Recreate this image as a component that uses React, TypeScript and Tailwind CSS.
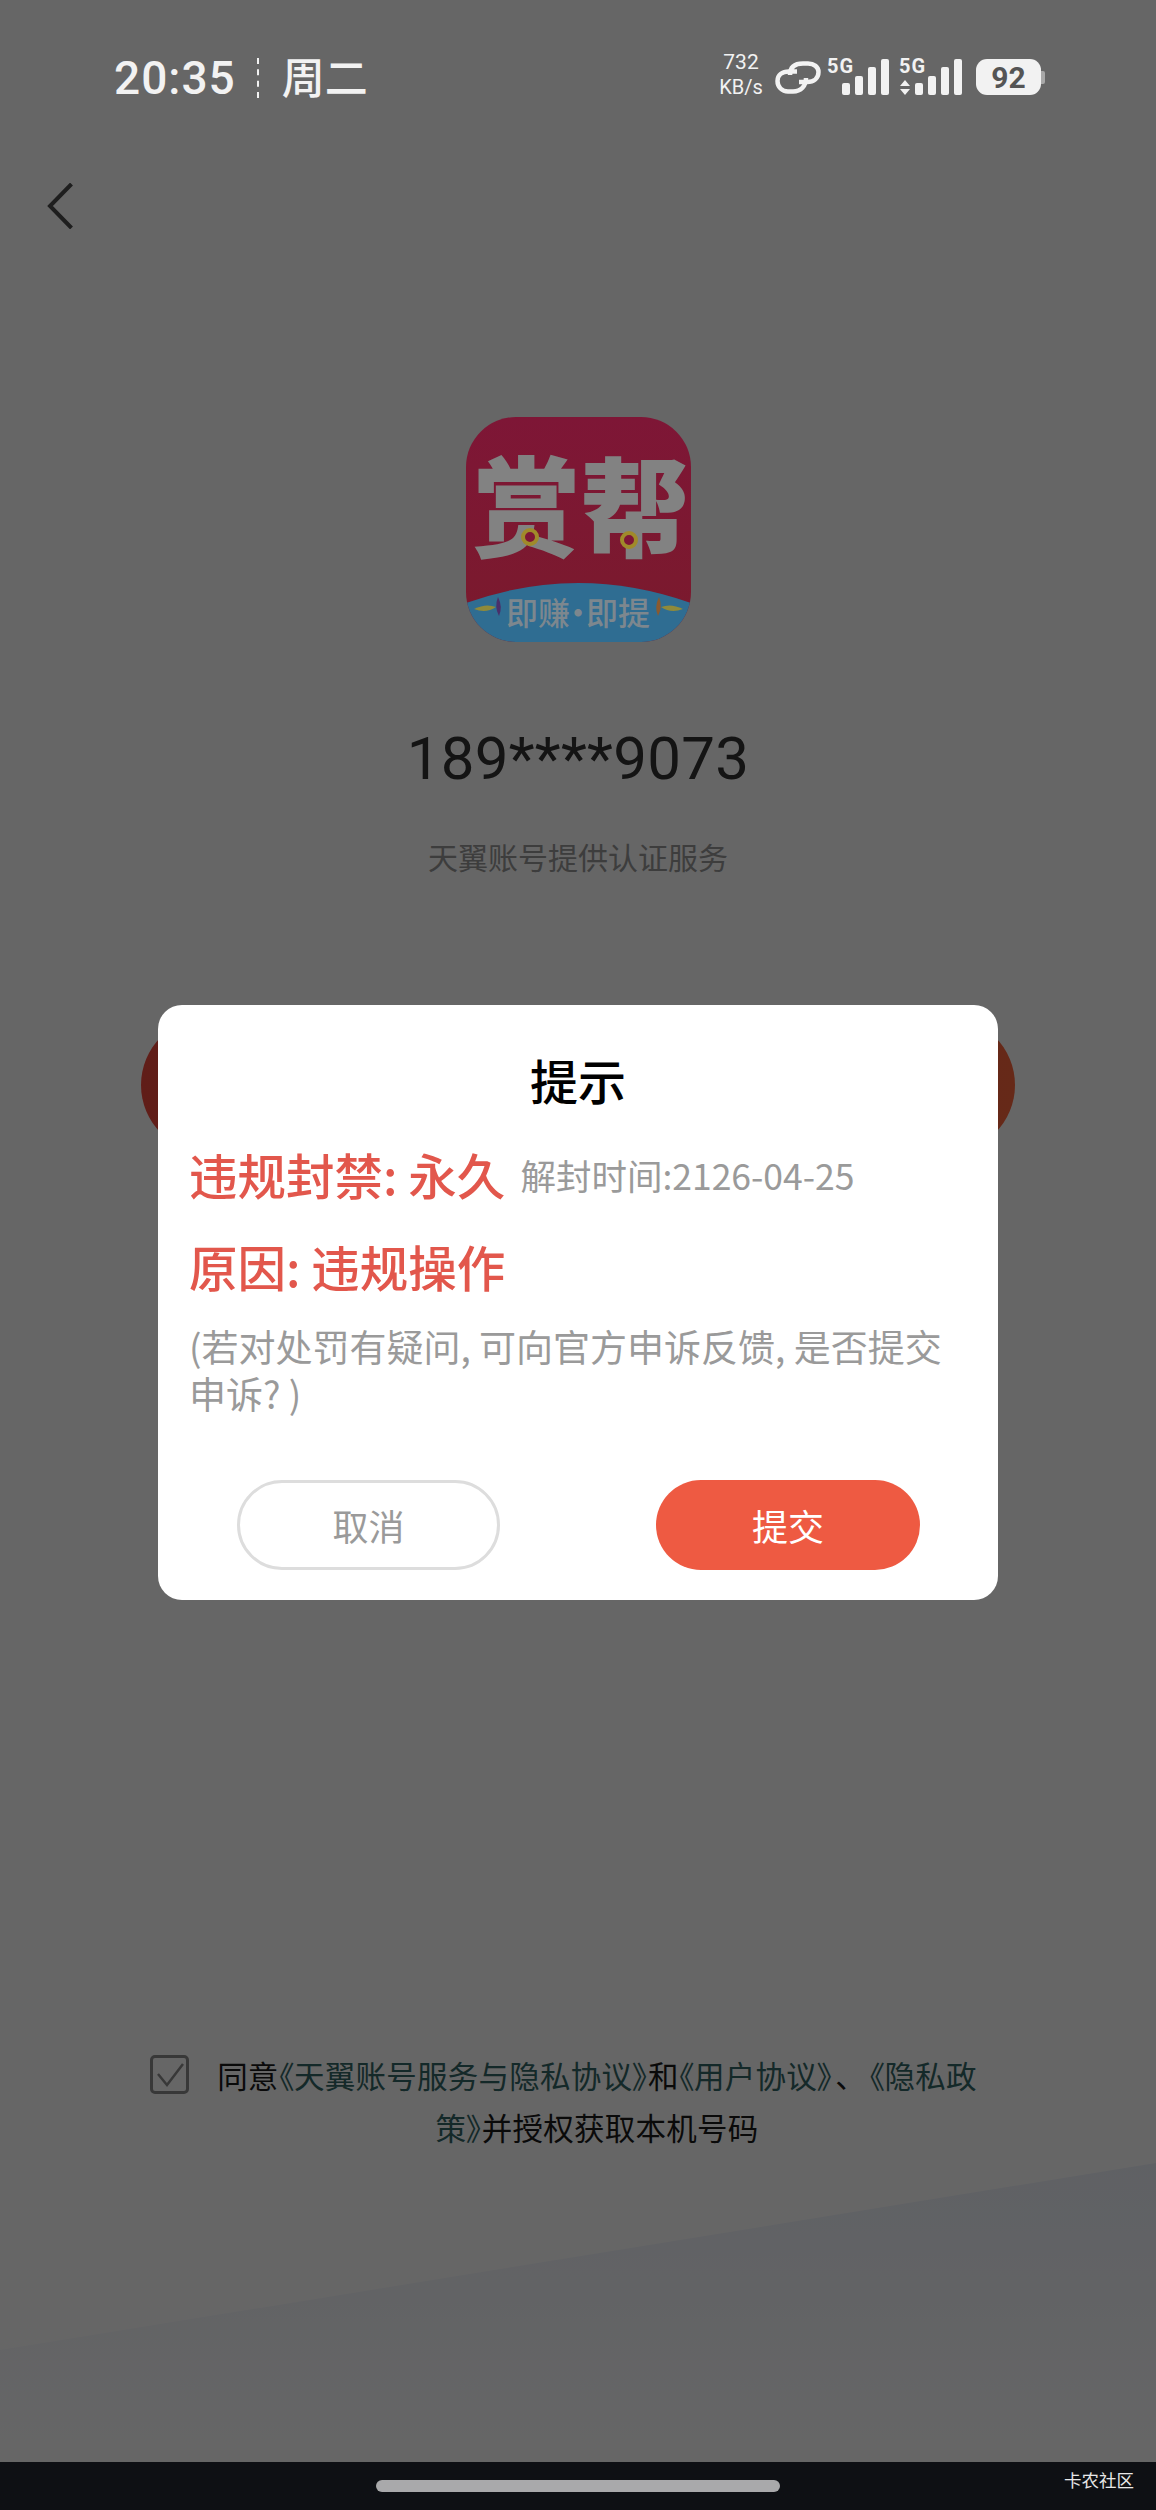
const cjk = { fontFamily: '"Noto Sans CJK SC", sans-serif' };
const roboto = { fontFamily: 'Roboto, sans-serif' };

function Signal({ arrows }: { arrows?: boolean }) {
  const bars = ['h-[12px]', 'h-[19px]', 'h-[28px]', 'h-[36px]'];
  return (
    <div className="relative flex items-end h-[38px] gap-[5px]">
      <span className={`absolute top-[-1px] text-[20px] tracking-[1px] font-bold leading-none text-[#f2f2f2] ${arrows ? 'left-[-16px]' : 'left-[-15px]'}`}>
        5G
      </span>
      {arrows && (
        <svg width="10" height="15" viewBox="0 0 10 15" className="absolute left-[-15px] bottom-0">
          <path d="M5 0L10 6H0Z M5 15L0 9H10Z" fill="#f2f2f2" />
        </svg>
      )}
      {bars.map((h) => (
        <div key={h} className={`w-[8px] rounded-[2px] bg-[#f2f2f2] ${h}`} />
      ))}
    </div>
  );
}

function StatusBar() {
  return (
    <div className="relative z-20 h-[98px] pt-[48px] pl-[114px] pr-[111px] flex items-start justify-between text-[#f2f2f2]" style={roboto}>
      <div className="flex items-center h-[60px]">
        <span className="text-[46px] font-medium tracking-[1px] leading-none">20:35</span>
        <div className="ml-[21px] h-[40px] border-l-2 border-dashed border-[#f2f2f2]" />
        <span className="ml-[23px] mt-[-5px] text-[43px] font-medium leading-none" style={cjk}>周二</span>
      </div>
      <div className="flex items-end h-[48px]">
        <div className="w-[50px] mb-[-4px] text-center text-[21px] leading-[25px]">
          <div>732</div>
          <div className="text-[20px]">KB/s</div>
        </div>
        <svg width="46" height="33" viewBox="0 0 46 33" className="ml-[9px] mb-[2px]" fill="none" stroke="#f2f2f2" strokeWidth="4.5">
          <path d="M15 14C15 6 20 2.5 28 2.5H33C39 2.5 43.5 6 43.5 11C43.5 17 39 21 32 21H24" />
          <path d="M31 17C31 25 26 30.5 18 30.5H13C7 30.5 2.5 26 2.5 20C2.5 14 7 10.5 14 10.5H22" />
        </svg>
        <div className="ml-[21px] mb-[1px]"><Signal /></div>
        <div className="ml-[26px] mb-[1px]"><Signal arrows /></div>
        <div className="ml-[14px] mb-[1px] flex items-center">
          <div className="w-[65px] h-[36px] rounded-[11px] bg-[#f2f2f2] flex items-center justify-center text-[30px] font-bold text-[#555555]">92</div>
          <div className="w-[4px] h-[13px] rounded-r-[2px] bg-[#a8a8a8]" />
        </div>
      </div>
    </div>
  );
}

function AppLogo() {
  return (
    <div className="relative z-[5] w-[225px] h-[225px] rounded-[50px] overflow-hidden bg-gradient-to-b from-[#7e1636] to-[#7a1a2c]" style={cjk}>
      <div className="absolute left-[7px] top-[25px] flex text-[108px] font-black leading-[120px] text-[#828282]">
        <span>赏</span><span>帮</span>
      </div>
      <svg width="225" height="225" viewBox="0 0 225 225" className="absolute inset-0">
        <path d="M0 186Q112 146 225 186V225H0Z" fill="#2f6d92" />
        {/* coins */}
        <circle cx="64" cy="120" r="7" fill="#7e1636" stroke="#a08a2a" strokeWidth="4" />
        <circle cx="163" cy="123" r="7" fill="#7e1636" stroke="#a08a2a" strokeWidth="4" />
        {/* leaves on the banner */}
        <path d="M8 192Q20 186 30 190Q20 197 8 192Z" fill="#8f8a3a" />
        <path d="M217 192Q205 186 195 190Q205 197 217 192Z" fill="#8f8a3a" />
        <path d="M32 180Q37 190 33 199Q28 190 32 180Z" fill="#4a2f6a" />
        <path d="M193 180Q188 190 192 199Q197 190 193 180Z" fill="#8a5a30" />
      </svg>
      <div className="absolute left-0 right-0 top-[172px] text-center text-[32px] leading-[44px] font-medium text-[#7d878e] whitespace-nowrap [font-feature-settings:'palt']">即赚·即提</div>
    </div>
  );
}

function AlertDialog() {
  return (
    <div className="absolute z-10 left-[158px] top-[1005px] w-[840px] h-[595px] rounded-[24px] bg-white pl-[31px] pr-[31px] pt-[44px]" style={cjk}>
      <h2 className="text-center text-[48px] leading-[60px] font-medium text-black">提示</h2>
      <div className="mt-[33px] flex items-center h-[64px]">
        <span className="text-[48.5px] font-medium leading-none whitespace-nowrap text-[#e2574c]">违规封禁: 永久</span>
        <span className="ml-[15px] mt-[2px] text-[35.5px] leading-none text-[#9a9a9a] whitespace-nowrap">解封时间:2126-04-25</span>
      </div>
      <div className="mt-[28px] text-[48.5px] font-medium leading-[64px] text-[#e2574c]">原因: 违规操作</div>
      <p className="mt-[25px] text-[37px] leading-[47px] text-[#9a9a9a]">(若对处罚有疑问, 可向官方申诉反馈, 是否提交申诉? )</p>
      <div className="mt-[63px] flex justify-between pl-[48px] pr-[47px]">
        <button className="w-[263px] h-[90px] rounded-full border-[3px] border-[#dddddd] text-[36px] text-[#9a9a9a]">取消</button>
        <button className="w-[264px] h-[90px] rounded-full bg-[#ee5a42] text-[36px] text-white">提交</button>
      </div>
    </div>
  );
}

export default function App() {
  return (
    <div className="relative w-[1156px] h-[2510px] overflow-hidden bg-white flex flex-col" style={cjk}>
      <StatusBar />
      <div className="pl-[47px] pt-[85px] h-[319px]">
        <svg width="26" height="46" viewBox="0 0 26 46" fill="none" stroke="#1e1e1e" strokeWidth="4" className="relative z-20">
          <path d="M24.5 1L3 23L24.5 45" />
        </svg>
      </div>

      <div className="flex flex-col items-center">
        <AppLogo />
        <div className="mt-[78px] text-[60px] tracking-[0.3px] leading-[78px] text-[#333333]" style={roboto}>189****9073</div>
        <div className="mt-[37px] text-[30px] leading-[42px] text-[#999999]">天翼账号提供认证服务</div>
      </div>

      <button className="mx-[141px] mt-[140px] h-[136px] shrink-0 rounded-full bg-gradient-to-r from-[#f04a3c] to-[#ff663c]" />

      <div className="flex-1" />

      <div className="relative flex justify-center items-start pl-[150px] pr-[176px] pb-[357px] text-[30.5px] tracking-[0.25px] leading-[52px] text-[#1a1a1a]">
        <div className="w-[39px] h-[39px] mt-[6px] mr-[25px] shrink-0 rounded-[5px] border-[3px] border-[#8c8c8c] flex items-center justify-center">
          <svg width="30" height="26" viewBox="0 0 30 26" fill="none" stroke="#8c8c8c" strokeWidth="2.5"><path d="M3 12L12 23L28 2" /></svg>
        </div>
        <p className="flex-1 text-center whitespace-nowrap [font-feature-settings:'palt']">
          同意<span className="text-[#336666]">《天翼账号服务与隐私协议》</span>和<span className="text-[#336666]">《用户协议》</span><span className="ml-[3px] mr-[18px]">、</span><span className="text-[#336666]">《隐私政</span>
          <br />
          <span className="text-[#336666]">策》</span>并授权获取本机号码
        </p>
      </div>

      {/* decorative wedge at the bottom */}
      <svg width="1156" height="360" viewBox="0 0 1156 360" className="absolute left-0 top-[2160px]">
        <defs>
          <linearGradient id="wedge" x1="0" y1="0" x2="0" y2="1">
            <stop offset="0" stopColor="#eef2fb" />
            <stop offset="1" stopColor="#ffffff" />
          </linearGradient>
        </defs>
        <path d="M0 190L1156 3V300H0Z" fill="url(#wedge)" />
      </svg>

      {/* dim scrim */}
      <div className="absolute inset-0 bg-black/60" />
      <AlertDialog />

      <div className="absolute z-20 left-0 right-0 bottom-0 h-[48px] bg-[#0e1014] flex justify-center pt-[18px]">
        <div className="w-[404px] h-[12px] rounded-full bg-[#a9a9ab]" />
        <span className="absolute right-[22px] top-[6px] text-[17.5px] leading-[24px] text-[#e8e8e8]">卡农社区</span>
      </div>
    </div>
  );
}
